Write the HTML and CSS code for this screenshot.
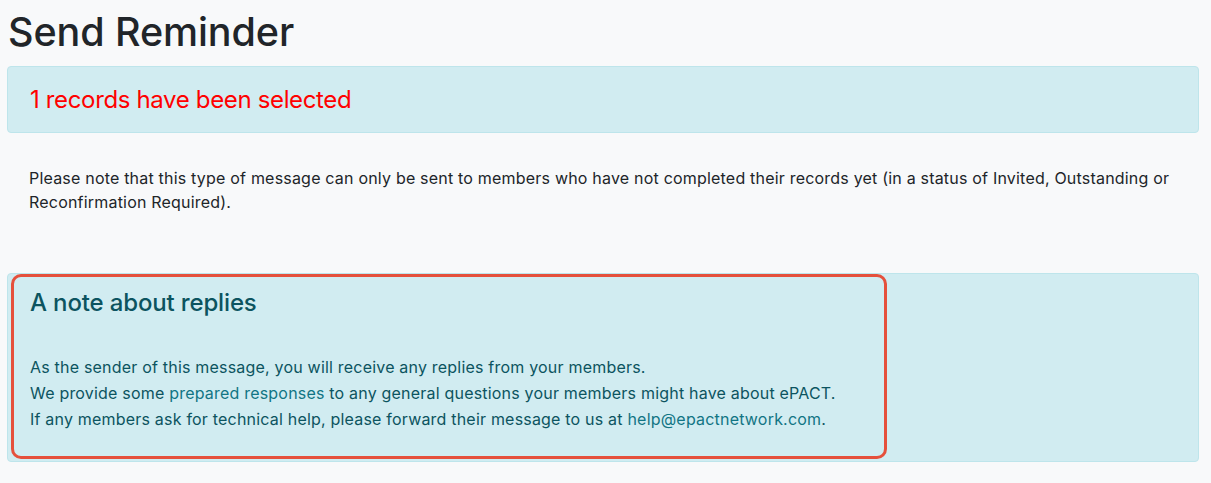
FILE: index.html
```html
<!DOCTYPE html>
<html lang="en">
<head>
<meta charset="utf-8">
<title>Send Reminder</title>
<link rel="stylesheet" href="styles.css">
</head>
<body>
<main class="page">
  <h1 class="title">Send Reminder</h1>
  <div class="alert alert-selected">
    <h4 class="selected-text">1 records have been selected</h4>
  </div>
  <p class="note">Please note that this type of message can only be sent to members who have not completed their records yet (in a status of Invited, Outstanding or Reconfirmation Required).</p>
  <div class="alert alert-replies">
    <div class="highlight">
      <h4 class="replies-title">A note about replies</h4>
      <p class="replies-text">As the sender of this message, you will receive any replies from your members.<br>We provide some <a href="#" class="alert-link">prepared responses</a> to any general questions your members might have about ePACT.<br>If any members ask for technical help, please forward their message to us at <a href="#" class="alert-link">help@epactnetwork.com</a>.</p>
    </div>
  </div>
</main>
</body>
</html>
```

FILE: styles.css
```css
html, body {
  margin: 0;
  padding: 0;
  background: #f8f9fa;
}

body {
  font-family: Inter, "Noto Sans", "Liberation Sans", sans-serif;
  color: #212529;
  font-size: 16px;
  line-height: 1.5;
  letter-spacing: 0.2px;
}

.page {
  padding: 0 12px 0 7px;
}

.title {
  margin: 8px 0 10px 1px;
  font-size: 39.5px;
  font-weight: 500;
  line-height: 48px;
  letter-spacing: -0.1px;
  color: #212529;
}

.alert {
  background: #d1ecf1;
  border: 1px solid #bee5eb;
  border-radius: 4px;
  color: #0c5460;
}

.alert-selected {
  padding: 18px 22px;
}

.selected-text {
  margin: 0;
  font-size: 24px;
  font-weight: 400;
  line-height: 29px;
  letter-spacing: -0.35px;
  color: #ff0000;
}

.note {
  margin: 33px 0 59px 0;
  padding: 0 18px 0 22px;
  line-height: 24px;
}

.alert-replies {
  padding: 0 0 2px 3px;
  display: flex;
}

.highlight {
  box-sizing: border-box;
  width: 876px;
  border: 3px solid #e5503c;
  border-radius: 10px;
  padding: 11px 0 24px 16px;
}

.replies-title {
  margin: 0 0 37px 0;
  font-size: 24px;
  font-weight: 500;
  line-height: 29px;
  letter-spacing: -0.15px;
}

.replies-text {
  margin: 0;
  line-height: 26px;
}

.alert-link {
  color: #117584;
  text-decoration: none;
}
```
